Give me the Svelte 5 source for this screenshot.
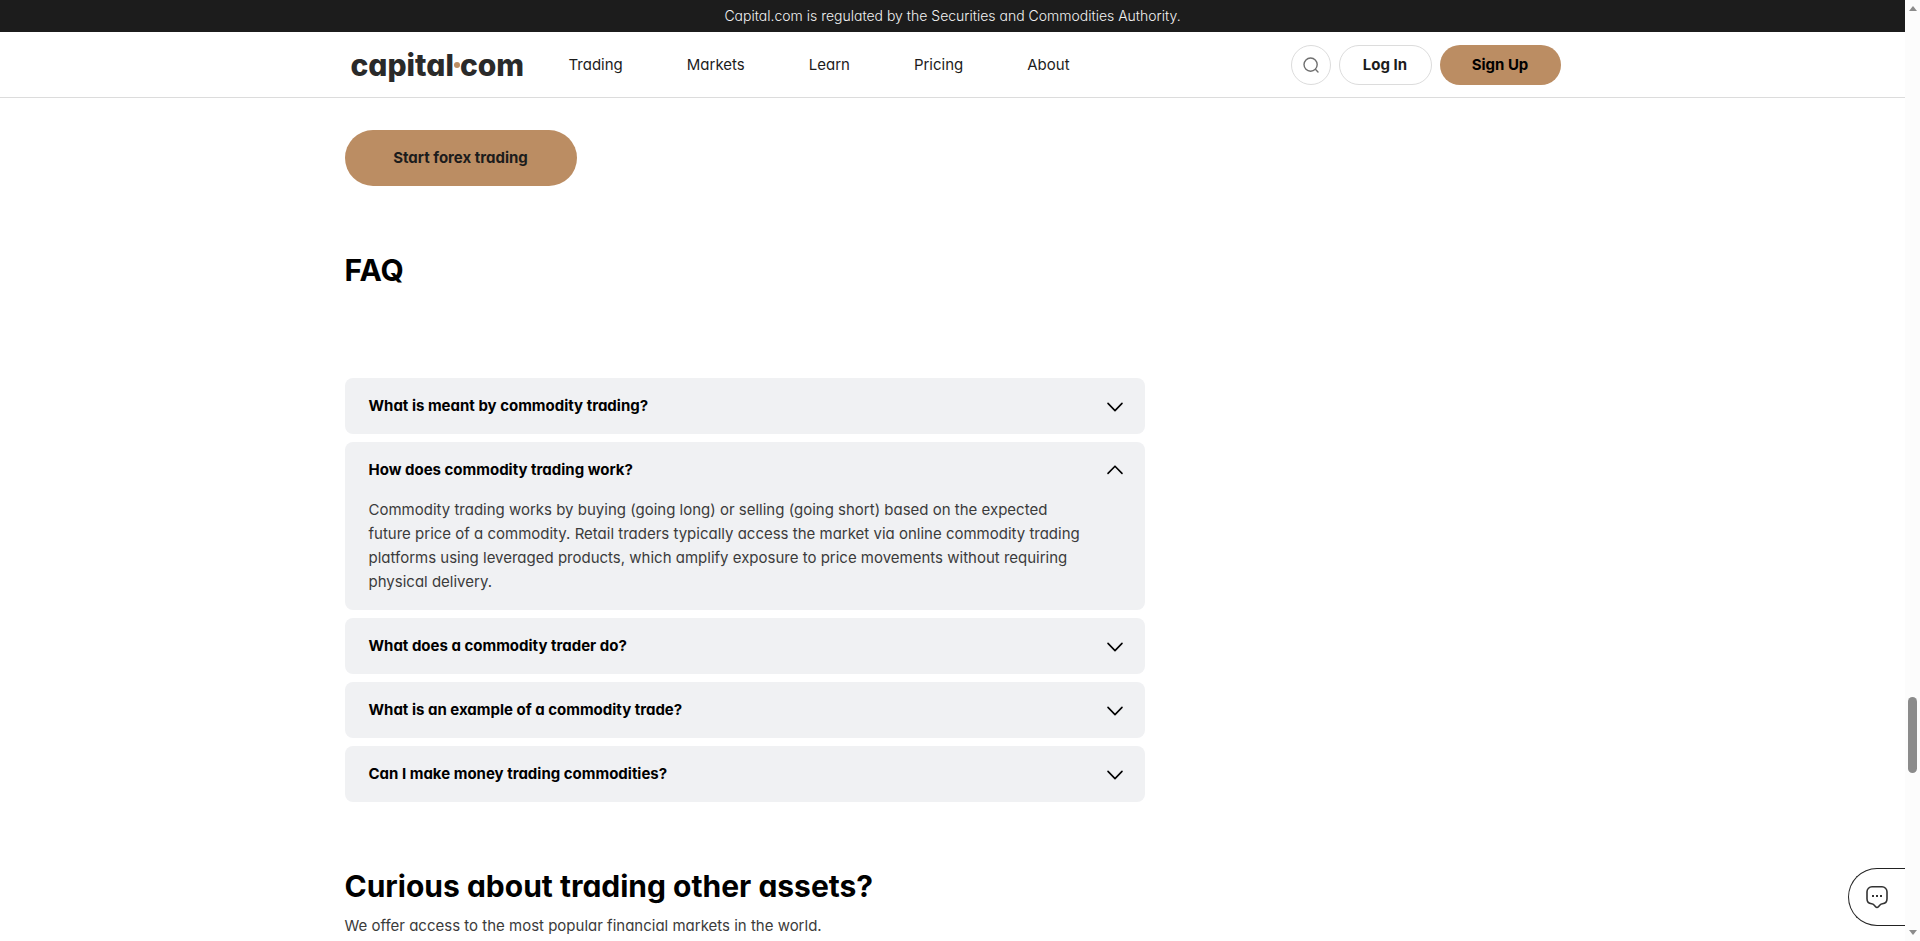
<script>
  const nav = ['Trading', 'Markets', 'Learn', 'Pricing', 'About'];

  const questions = [
    { title: 'What is meant by commodity trading?' },
    {
      title: 'How does commodity trading work?',
      answer:
        'Commodity trading works by buying (going long) or selling (going short) based on the expected future price of a commodity. Retail traders typically access the market via online commodity trading platforms using leveraged products, which amplify exposure to price movements without requiring physical delivery.'
    },
    { title: 'What does a commodity trader do?' },
    { title: 'What is an example of a commodity trade?' },
    { title: 'Can I make money trading commodities?' }
  ];

  let open = $state(1);
</script>

<div class="window">
  <div class="page">
    <div class="notice">Capital.com is regulated by the Securities and Commodities Authority.</div>

    <header>
      <div class="container bar">
        <a class="logo" href="#home">capital<span class="dot"></span>com</a>
        <nav>
          {#each nav as item}
            <a href="#{item.toLowerCase()}">{item}</a>
          {/each}
        </nav>
        <div class="actions">
          <button class="search" aria-label="Search">
            <svg width="16" height="16" viewBox="0 0 16 16" fill="none" stroke="#6f6f6f" stroke-width="1.4" stroke-linecap="round">
              <circle cx="7.6" cy="7.6" r="6.6" />
              <path d="M12.6 12.6 15 15" />
            </svg>
          </button>
          <button class="login">Log In</button>
          <button class="signup">Sign Up</button>
        </div>
      </div>
    </header>

    <main class="container">
      <button class="cta">Start forex trading</button>

      <h2>FAQ</h2>

      <div class="faq">
        {#each questions as q, i}
          <section class="item">
            <h3>
              <button class="question" aria-expanded={open === i} onclick={() => (open = open === i ? -1 : i)}>
                <span>{q.title}</span>
                <svg width="18" height="18" viewBox="0 0 18 18" fill="none" stroke="#000" stroke-width="1.6" stroke-linecap="round" stroke-linejoin="round">
                  {#if open === i}
                    <path d="M2 12.4 9 5.2 16 12.4" />
                  {:else}
                    <path d="M2 6.4 9 13.6 16 6.4" />
                  {/if}
                </svg>
              </button>
            </h3>
            {#if open === i && q.answer}
              <p>{q.answer}</p>
            {/if}
          </section>
        {/each}
      </div>

      <h2>Curious about trading other assets?</h2>
      <p class="lead">We offer access to the most popular financial markets in the world.</p>
    </main>

    <button class="chat" aria-label="Open chat">
      <svg width="24" height="24" viewBox="0 0 24 24" fill="none" stroke="#333" stroke-width="1.6" stroke-linejoin="round">
        <path d="M7 1.8h10a5 5 0 0 1 5 5v7c0 3.2-1.6 4.8-4.6 5-1 .1-1.7.4-2.2 1l-1.8 2c-.8.9-2 .9-2.8 0l-1.800-2c-.5-.6-1.200-.9-2.200-1C3.600 18.600 2 17 2 13.800v-7a5 5 0 0 1 5-5Z" />
        <path d="M7 11h2M11 11h2M15 11h2" stroke-width="2" />
      </svg>
    </button>
  </div>

  <div class="rail" aria-hidden="true">
    <span class="arrow up"></span>
    <div class="track">
      <span class="before"></span>
      <span class="thumb"></span>
      <span class="after"></span>
    </div>
    <span class="arrow down"></span>
  </div>
</div>

<style>
  :global(body) {
    margin: 0;
  }

  .window {
    display: flex;
    height: 100vh;
    overflow: hidden;
    font-family: Inter, 'Liberation Sans', sans-serif;
    font-feature-settings: 'cv11';
    font-size: 15px;
    line-height: 24px;
    color: #1c1c1c;
    background: #fff;
  }

  .page {
    position: relative;
    flex: 1;
    min-width: 0;
    overflow: hidden;
  }

  button {
    font: inherit;
    font-feature-settings: inherit;
    color: inherit;
    border: 0;
    padding: 0;
    background: none;
    cursor: pointer;
  }

  a {
    color: inherit;
    text-decoration: none;
  }

  .container {
    box-sizing: border-box;
    max-width: 1216px;
    margin: 0 auto;
  }

  .notice {
    background: #1c1c1c;
    color: #f2f2f2;
    font-size: 14px;
    line-height: 32px;
    text-align: center;
    font-weight: 300;
  }

  header {
    border-bottom: 1px solid #dcdcdc;
  }

  .bar {
    display: flex;
    align-items: center;
    height: 65px;
    padding-left: 6px;
  }

  .logo {
    display: flex;
    align-items: center;
    width: 172px;
    font-size: 30px;
    line-height: 40px;
    font-weight: 800;
    color: #2a2a2a;
  }

  .dot {
    flex: none;
    width: 6px;
    height: 6px;
    border-radius: 50%;
    background: #bb8d63;
  }

  nav {
    display: flex;
    gap: 64px;
    margin-left: 46px;
  }

  .actions {
    display: flex;
    gap: 8px;
    margin-left: auto;
    font-weight: 700;
  }

  .actions button {
    box-sizing: border-box;
    height: 40px;
    border-radius: 20px;
  }

  .actions .search {
    display: grid;
    place-items: center;
    width: 40px;
    border: 1px solid #dcdcdc;
  }

  .actions .login {
    min-width: 93px;
    padding: 0 20px;
    border: 1px solid #dcdcdc;
  }

  .actions .signup {
    min-width: 121px;
    padding: 0 20px;
    background: #bb8d63;
    color: #000;
  }

  .cta {
    display: block;
    height: 56px;
    margin-top: 32px;
    padding: 0 40px;
    min-width: 232px;
    border-radius: 28px;
    background: #bb8d63;
    font-weight: 700;
  }

  h2 {
    margin: 64px 0 0;
    font-size: 30px;
    line-height: 40px;
    font-weight: 700;
    color: #000;
  }

  .faq {
    display: grid;
    gap: 8px;
    max-width: 800px;
    margin-top: 88px;
  }

  .item {
    background: #f0f1f3;
    border-radius: 8px;
  }

  h3 {
    margin: 0;
    font-size: 15px;
    font-weight: 700;
  }

  .question {
    display: flex;
    align-items: center;
    justify-content: space-between;
    width: 100%;
    height: 56px;
    padding: 0 21px 0 24px;
    color: #000;
    text-align: left;
  }

  .item p {
    margin: 0;
    padding: 0 60px 16px 24px;
    color: #3b3b3b;
  }

  .lead {
    margin: 8px 0 0;
    color: #3b3b3b;
  }

  .chat {
    position: absolute;
    right: 0;
    bottom: 15px;
    box-sizing: border-box;
    display: flex;
    align-items: center;
    width: 57px;
    height: 58px;
    padding-left: 16px;
    border: 1px solid #222;
    border-right: 0;
    border-radius: 29px 0 0 29px;
    background: #fff;
  }

  .rail {
    display: flex;
    flex-direction: column;
    align-items: center;
    box-sizing: border-box;
    width: 15px;
    padding: 6px 0;
    background: #fcfcfc;
  }

  .track {
    display: flex;
    flex: 1;
    flex-direction: column;
    margin: 4px 0;
  }

  .before {
    flex: 683;
  }

  .thumb {
    flex: 76;
    width: 9px;
    border-radius: 5px;
    background: #8b8b8b;
  }

  .after {
    flex: 153;
  }

  .arrow {
    border: 4px solid transparent;
  }

  .up {
    border-top: 0;
    border-bottom: 5px solid #8b8b8b;
  }

  .down {
    border-bottom: 0;
    border-top: 5px solid #8b8b8b;
  }
</style>
